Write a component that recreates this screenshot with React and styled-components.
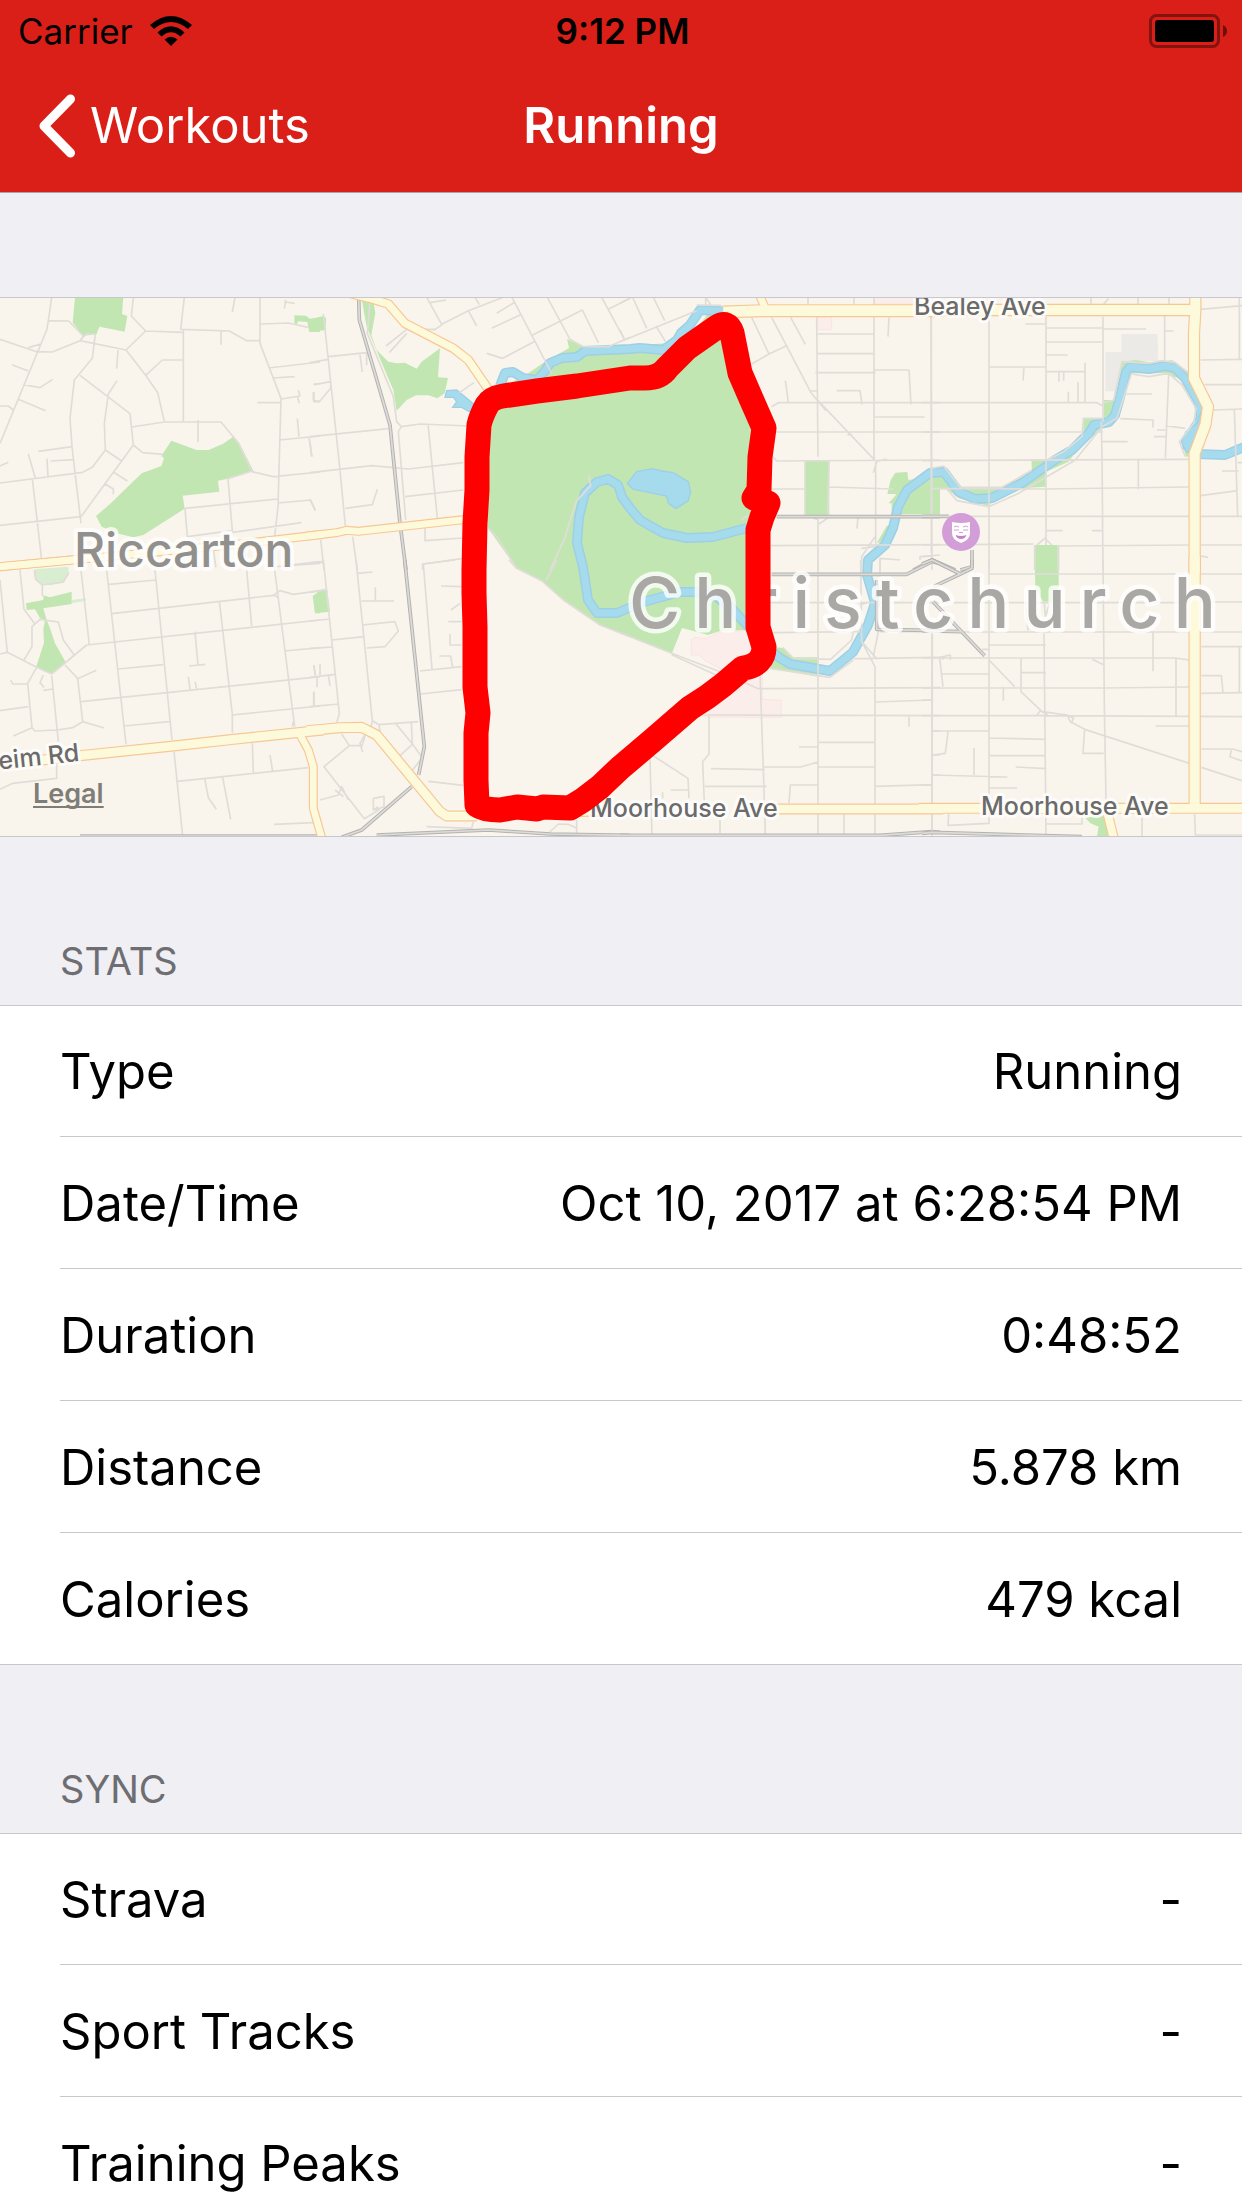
import styled, { createGlobalStyle } from "styled-components";

const GlobalStyle = createGlobalStyle`
  * {
    box-sizing: border-box;
  }
  body {
    margin: 0;
    background: #efeff4;
    font-family: Inter, "Liberation Sans", sans-serif;
    color: #000;
  }
`;

const Screen = styled.div`
  display: flex;
  flex-direction: column;
  height: 100vh;
`;
const Header = styled.header`
  flex: none;
  background: #da1f18;
  border-bottom: 1px solid #a9a4a9;
`;
const StatusBar = styled.div`
  display: grid;
  grid-template-columns: 1fr auto 1fr;
  align-items: center;
  height: 60px;
  padding: 2px 15px 0 18px;
  font-size: 35px;
  line-height: 40px;
`;
const Carrier = styled.div`
  display: flex;
  align-items: center;
  gap: 17px;
`;
const Time = styled.time`
  font-weight: 600;
`;
const Battery = styled.svg`
  justify-self: end;
`;
const NavBar = styled.nav`
  display: grid;
  grid-template-columns: 1fr auto 1fr;
  align-items: center;
  height: 132px;
  padding: 0 38px;
`;
const BackButton = styled.button`
  display: flex;
  align-items: center;
  justify-self: start;
  gap: 15px;
  padding: 0;
  border: 0;
  background: none;
  color: #fff;
  font-family: inherit;
  font-size: 49px;
  line-height: 64px;
`;
const Title = styled.h1`
  margin: 0;
  color: #fff;
  font-size: 49px;
  font-weight: 600;
  line-height: 64px;
`;
const Content = styled.main`
  flex: 1;
  min-height: 0;
  padding-top: 104px;
  overflow-y: auto;
  scrollbar-width: none;
`;

const MapCard = styled.section`
  position: relative;
  border-top: 1px solid #c8c7cc;
  border-bottom: 1px solid #c8c7cc;
`;
const MapSvg = styled.svg`
  display: block;
  width: 100%;
  background: #f9f5ed;
`;
const LegalLink = styled.a`
  position: absolute;
  left: 33px;
  bottom: 26px;
  color: #7f7d78;
  font-size: 27px;
  font-weight: 600;
  line-height: 32px;
  text-decoration-thickness: 2px;
  text-underline-offset: 3px;
  text-decoration-skip-ink: none;
`;
const Line = styled.path`
  fill: none;
  stroke: ${({ $color }) => $color};
  stroke-width: ${({ $width }) => $width};
  stroke-linejoin: round;
  stroke-linecap: ${({ $round }) => ($round ? "round" : "butt")};
`;
const Label = styled.text`
  fill: ${({ $color }) => $color || "#6b6b6b"};
  font-size: ${({ $size }) => $size || 25}px;
  font-weight: 500;
  stroke: rgba(255, 255, 255, 0.8);
  stroke-width: ${({ $halo }) => $halo || 6}px;
  stroke-linejoin: round;
  paint-order: stroke;
`;
const CityLabel = styled(Label)`
  letter-spacing: 14px;
`;

const SectionTitle = styled.h2`
  display: flex;
  align-items: flex-end;
  height: 168px;
  margin: 0;
  padding: 0 60px 20px;
  color: #6d6d72;
  font-size: 38px;
  font-weight: 400;
  line-height: 48px;
`;
const Group = styled.dl`
  margin: 0;
  padding-left: 60px;
  border-top: 1px solid #c8c7cc;
  border-bottom: 1px solid #c8c7cc;
  background: #fff;
`;
const Row = styled.div`
  display: flex;
  justify-content: space-between;
  align-items: center;
  height: 132px;
  padding: 2px 60px 0 0;
  border-bottom: 1px solid #c8c7cc;
  font-size: 49px;
  line-height: 64px;

  &:first-child {
    height: 131px;
  }
  &:last-child {
    height: 131px;
    border-bottom: 0;
  }
`;
const Name = styled.dt``;
const Value = styled.dd`
  margin: 0;
`;

const STATS = [
  ["Type", "Running"],
  ["Date/Time", "Oct 10, 2017 at 6:28:54 PM"],
  ["Duration", "0:48:52"],
  ["Distance", "5.878 km"],
  ["Calories", "479 kcal"],
];

const SYNC = [
  ["Strava", "-"],
  ["Sport Tracks", "-"],
  ["Training Peaks", "-"],
];

// Every tile has its own origin and is drawn at a third of its units.
const TILES = [
  {
    x: 0,
    y: 290,
    parks:
      "M225 22 370 22 366 72 382 78 374 125 298 110 290 132 250 138 218 98ZM883 76 918 77 930 86 960 83 960 126 928 126 924 108 922 96 894 94 890 106 883 98ZM514 452 590 480 626 480 668 462 700 440 718 460 760 542 684 566 654 572 658 605 548 617 554 656 430 735 400 742 350 730 305 710 288 678 330 642 425 550 484 528 492 505 484 498Z",
    roads:
      "M155 22 145 92 140 120 0 460M145 92 206 93 250 138 240 152M0 148 110 185 157 186 240 152 378 180 437 256 473 308 493 395M85 173 122 162M240 152 258 132 286 132 277 205 223 270 210 385 216 470 225 548 243 700M400 22 394 78 437 123 378 180M437 123 550 127M553 22 542 118 688 123 740 152 780 152M550 118V395M437 256 487 210 550 210M240 256 390 371 400 465 243 680 0 706M351 272 325 312 313 400 316 480 365 513M316 480 277 532 248 547 0 579M400 465 428 488 490 493M395 411 493 396 663 396 716 460 756 545 820 560 960 546M756 543 684 566M594 390V457M354 180 350 236M705 22 697 66M663 123V164M780 22V160L843 325 834 650 824 740M780 102 865 99 925 112M853 56 857 30M857 36 884 40M806 234 960 216M818 264 884 260M843 327 900 318M895 300 900 318M893 322 898 340M772 338H843M838 450 960 438M892 385 897 440M927 443 936 500M940 283 960 281M942 306V335H960M36 224 85 243M70 284 120 293 158 268M55 328 137 362M0 348H25L40 360M85 492 106 565M115 484 216 470M152 513 220 509M141 506 144 560M0 528 25 517M97 567 125 810M340 546 382 573M315 582 340 597V613M555 655 833 627M834 639 932 630 946 661M555 655 562 740 695 722M698 727 904 698M684 566 698 735M640 780 648 832M735 770V800M828 770 824 840M850 828 960 820",
    majors: [["M-10 831 110 820 480 785 720 762 970 733", 20]],
  },
  {
    x: 310,
    y: 290,
    parks:
      "M0 88 40 78 48 84 47 120 0 126ZM154 22 190 34 196 70 184 135 200 180 235 215 262 220 285 218 320 236 335 215 390 175 384 262 414 264 404 310 382 325 355 316 318 316 290 330 260 362 250 300 222 235 170 110Z",
    water:
      "M410 302 440 300 495 345 515 310 525 330 490 372 455 352 428 352 440 335 430 322 405 322Z",
    roads:
      "M40 72 55 210 90 540 106 708M0 218 55 208M55 200 170 188M150 195 157 246M170 188V226M180 34 172 130 250 320 260 395 274 410 265 425 287 690M274 410 330 402 480 408M0 440 235 416M0 548 185 527 295 537 460 518M354 402 382 684M285 620 460 600M106 655 187 644 202 598M14 284 62 275M10 306V330L28 335 62 295 62 275M350 22 395 103 475 62 580 22M360 38 408 30M475 62 500 108M495 22 508 44M560 70 612 38M545 115 632 74M606 22 725 250M530 190 578 205 672 155M668 135 817 60 865 158M712 22 780 148 820 170 895 170 960 142M875 22 942 146M895 58 960 25M228 168 290 118M238 188 290 130M370 122 395 105M290 118 375 118M448 308 492 278M345 710V752L460 744M338 840V822L455 806M32 748 42 840M0 818H38M128 740 142 840M0 455 5 500M0 628 16 662M535 715 560 740 620 835M836 557 842 587 798 635 764 745 720 840",
    rails: "M146 22 148 90 240 405 270 700 288 840",
    majors: [
      ["M120 10 180 25 235 42 285 100 430 175 475 210 540 305", 22],
      ["M-10 738 80 728 110 721 145 724 470 688", 20],
    ],
  },
  {
    x: 620,
    y: 290,
    parks:
      "M555 510H628V680H555ZM826 548 862 546 865 570 930 560 960 535V672H815V640H806L830 612H802L812 570ZM800 708 818 700 800 750 770 760Z",
    pink: "M592 82H635V119H592ZM762 22H880V42H762Z",
    water:
      "M22 580 50 545 97 536 125 543 160 548 205 575 212 605 205 632 168 656 145 640 140 618 75 605 40 598Z",
    roads:
      "M590 82 594 500M594 690V840M762 22V510M767 516V770M933 82 936 840M455 350 475 338H960M466 426H960M458 500 470 513 960 510M455 597H555M627 591 820 597M452 767 960 764M590 132H762M590 191H762M586 248H767M762 240H867L873 343M650 302H720L726 343M762 381H914M455 82 573 308 618 362M573 303H590M594 332 762 508M760 548 770 515 800 507M682 434H696M395 82 447 192 500 167M447 192 395 222M512 82 556 163M496 272 505 336M807 82 804 140M702 22V42M564 22V42M257 22V45M257 22 275 48M0 40 35 22M38 22 80 115M0 155 230 62M100 22 134 92M108 108 136 154M0 120 12 145M555 513V684M627 513 623 684 597 702M580 684 597 690M765 740 725 800V840M765 770 725 775M780 840V805L840 810M900 810V800L960 795M714 680 711 716M230 45 300 46 320 55M362 690 385 676",
    rails: "M470 680H960M880 840 936 810 970 825",
    majors: [
      ["M310 66 430 62H970", 32],
      ["M434 50 418 15", 20],
    ],
  },
  {
    x: 922,
    y: 290,
    gray: "M550 186H598V132H706L709 212 600 216 580 304H550Z",
    parks:
      "M0 560 30 590V672H0ZM28 535 65 528 115 592 240 592 330 545 328 508H372V590L250 597 200 648 110 625 75 597H30ZM372 510 450 470 484 440V385H520L540 420 480 460 440 515 372 545ZM545 330H580L600 215 640 210 700 220 750 210 800 245 810 300 770 265 720 250 620 250 590 370 545 385ZM338 765H412V840H338ZM780 455 792 500H800V470Z",
    water: "M836 370 845 400 810 490 792 485 778 455 792 425 825 400Z",
    roads:
      "M28 80V790M201 80V840M372 80V765M543 80V395M538 395 540 500 543 840M0 338H525L543 348M0 426H480M520 426H543M0 512 800 508M30 595 370 597 800 591M0 679H800M836 679H960M0 765 335 762M410 768 800 765M836 765H960M372 114H543M543 117H672M372 156H543M372 195H437M310 102H372M203 231H372M306 231 303 272M372 245H489M489 218V338M411 247V275M425 247V272M439 305V338M468 276V338M728 78V210M728 123H755M836 58 960 47M952 22V210M836 210 960 208M848 284H960M875 360 960 357M937 357 947 680M900 543H950M947 518H960M836 617 947 602M612 312H690M595 386 693 390V413M740 255 730 505M730 407 790 415M705 420H730M696 440H730M540 455H617M649 508V598M372 722H422M510 722H543M507 22V42M648 22V42M741 22V42M545 42 560 25M836 798 858 802M345 765 368 745 390 765M338 765V840M408 765V840M240 592 330 540M370 512 425 485 480 440 484 385H540M28 535 65 528 115 592H240M30 597H75L105 632 200 650 290 610 460 510 540 410 585 385 628 252 680 260 740 250 780 285 822 355 815 400 772 455 790 500M545 338 575 330 600 215 680 220 720 212 760 218 800 250M0 800 30 798",
    rails: "M0 679H80M150 780V830L115 840M0 825 30 810 100 840",
    majors: [
      ["M-10 60H820", 30],
      ["M820 10V60L816 130V265L858 350 850 405 818 490V850", 30],
    ],
  },
  {
    x: 0,
    y: 560,
    paleParks: "M103 28 205 20 206 45 190 68 150 76 125 72 105 55ZM215 120 258 115V122L215 130Z",
    parks:
      "M78 130 130 120 130 106 150 112 215 95V132L130 145 140 180 152 210 165 250 198 308 155 342 108 322 132 248 130 208 135 180 120 175 105 148 80 150ZM938 108 960 92V160H945Z",
    roads:
      "M0 60 22 277 110 322 83 370 96 503 105 513 172 510 218 503 248 485 233 355 195 315M110 322 155 342M22 277 0 282M83 372H38L32 360M0 452 85 440M40 528 96 503M248 485 313 504M230 358 289 331M60 30 72 148 103 190M72 300 96 260V200L120 178 175 186 190 240 222 284M127 108V75M103 30 107 58 127 75 190 66 206 38M155 347 175 545M130 345 120 368 132 382M130 391 158 387M155 342 260 255 960 180M243 30 268 255M320 30 378 553M465 30 516 540M327 73 467 60M336 161 820 106 840 92 880 103 960 92M355 327 490 314M243 425 960 350M372 498 508 485M658 122 697 463V518M697 465 960 438M740 30 755 198M824 30 884 500M830 20 960 5M853 273 960 263M585 215 594 317M567 318 616 313M565 350 570 388M585 365 590 388M941 315 946 347M941 395V438M0 688 38 670 170 655V610M522 575 548 828M533 664 925 623M757 550 760 640M810 585 818 634M614 656 625 713 649 748M668 652 692 778M822 793 940 788M877 500 880 485M818 104 834 112",
    rails: "M240 828H960",
    majors: [
      ["M895 515 925 570 940 620V745L967 840", 20],
      ["M-10 616 240 587 520 558 700 538 970 510", 26],
      ["M-10 21 300 -8", 20],
    ],
  },
  {
    x: 310,
    y: 560,
    parks: "M10 108H22V95L52 90 60 155 15 160Z",
    roads:
      "M40 0 88 460 80 490M138 0 187 482M0 10 35 5M143 40 188 36M155 123H252M196 82V123M0 97 50 88M0 183 60 177M66 240 162 230M157 195 255 185 265 213 225 260 170 264M0 266 66 261M0 352 75 343M0 440 87 432M12 316 16 345M30 312V345M21 350V382M55 345 60 378M12 395V438M187 482 207 494 325 485M207 494 210 515M258 492 308 553 335 590M304 487 307 553 270 587M335 595 300 640M187 482 182 505M170 515 150 550 158 577M165 528 155 560M95 522 118 557H150M118 557 42 620 163 776 210 748M30 720 85 705 95 680 115 720M75 690 100 710M190 715 222 709V740L195 750M190 715V750L205 740M340 12 435 0M340 12 366 328M393 78 455 80M423 150 450 130M415 185H455M420 222V255H455M388 288H422L428 322M330 333 455 320M332 402 455 389M355 664 460 676M350 800 485 805 490 785M710 825 745 792 775 793 800 805M800 780V825M597 0 620 25 695 62 760 120 870 195 960 230M740 0 708 62",
    rails:
      "M284 0 343 560 326 645M305 680 155 810 95 832M200 825 535 810 720 822 960 826",
    majors: [
      ["M-10 512 90 503 155 502 200 525 390 755 410 768 500 768", 26],
      ["M780 760 880 758", 16],
    ],
  },
  {
    x: 620,
    y: 560,
    parks: "M450 325 470 262 488 264 520 292H595V350Z",
    pink: "M213 240 225 232 258 236 300 215 380 212 400 280 310 330 260 305 235 285H213ZM230 465 427 330V418L484 421V472H260Z",
    roads:
      "M594 0V828M765 320V828M936 220V828M452 128H960M460 218 720 215M780 215 960 215M700 296 960 292M415 386 960 383M250 465 960 467M594 547H765M537 561H594M432 621H542L594 606M594 621H765M765 426 936 420M867 470V500M936 513H960M936 585H960M936 645H960M765 679 936 674M507 730 511 675H594M255 679H440M273 626 434 629M420 340 430 630 436 828M267 465V582L248 605 253 730M96 585 204 655 207 715M152 690H204M90 595 96 828M128 697V715M300 765V820M672 760V822M0 218 155 280 300 335 415 386M155 284 300 350M450 325 630 352 700 300M488 262 520 295 632 298 695 240 700 215M722 0 725 245 765 320M720 135 740 128H770L776 210 760 290M725 245 772 298M780 0V40",
    rails:
      "M455 43H860L936 5 960 10M770 60V208L960 212M0 826H780L936 815 960 817",
    majors: [["M450 747H970", 26]],
  },
  {
    x: 922,
    y: 560,
    parks:
      "M338 0H410V80L390 125H363L340 80ZM488 772 545 768 560 828H525L530 800 505 790Z",
    roads:
      "M31 220 30 828M201 0V790L78 796 80 762M366 220 372 828M543 0 547 440 552 720M200 42H800M836 42H960M50 128H800M836 126H960M120 216H960M0 294H760L802 300M0 384H550L802 381M0 467H370L960 470M203 255H372M297 294V395L360 455 435 465 445 485 488 508 802 610M435 465 455 475 447 490M838 622 960 662M297 338H372M180 268H200M201 300 278 380M244 380V422M53 294 63 380M60 342H200M53 292 85 285V300M60 298 75 285M31 513H200M78 515 70 580 32 585M203 534 372 538M203 587H372M281 621 372 626M31 645 256 651M156 564V645M203 684H285M0 675H30M0 420H30M488 505 483 580H545M511 298 545 314M693 218V334M762 294V467M700 498H802M838 260H960M952 260V400M838 347H898L903 398M838 400 960 398M838 567H932L960 575M928 570 924 590 960 603M310 128 318 212M367 128 370 170 383 128M372 792H480V770M660 765V828M818 762 820 825H960M345 465 355 452 378 465",
    rails:
      "M35 80 115 42 150 25V0M0 12 30 0 115 42M0 212 118 215M33 125 188 287M0 820 30 817 480 830",
    majors: [
      ["M552 740 575 835", 24],
      ["M-10 745H970", 26],
      ["M818 -10V745", 30],
    ],
  },
];

const HAGLEY_PARK =
  "M488 528 500 545 517 569 542 581 563 600 600 625 620 633 672 653 682 628 708 635 720 631 747 630 760 625 760 450 764 428 732 333 722 322 710 311 698 327 680 340 672 343 620 346 583 346 567 339 569 348 543 363 523 377 505 385 488 400 478 425Z";
const RIVER =
  "M500 386 505 373 513 372 523 378 537 380 545 371 550 363 562 358 577 357 585 351 630 349 640 348 663 350 677 340 681 333 690 325 700 310 720 311 728 315M747 528 713 537 687 538 663 533 640 520 630 508 622 497 618 485 608 479 597 482 585 493 579 517 577 543 583 567 588 600 597 613 617 613 643 602 680 592 697 592 717 597 733 610 747 625 767 648 780 658 790 664 830 671 853 652 868 625 875 603 867 575 868 560 885 545 893 528 898 507 907 490 930 473 944 472 959 492 975 499 992 498 1022 483 1055 460 1072 450 1089 433 1094 425 1109 422 1115 415 1120 397 1126 372 1130 367 1149 369 1165 366 1175 368 1185 378 1199 403 1201 418 1189 437 1187 450M1196 454 1225 455 1244 447";
const ROUTE =
  "M630 378 577 386 537 391 503 396Q491 398 487 405 481 416 479 425L477 457 477 490 475 523 474 570 474 593 475 627 475 687 478 713 476 733 476 780 477 805Q484 810 500 810L517 807 537 809 543 807 570 808 583 800 600 787 620 768 633 757 653 740 690 708 707 697 723 685 743 668Q764 665 764 647L758 627 758 530 762 517 768 503 754 498 759 490 760 457 764 428 753 403 740 373 732 333Q728 320 717 327L687 348 667 368Q660 378 645 378Z";

const Layer = ({ children }) =>
  TILES.map((tile) => (
    <g
      key={`${tile.x}-${tile.y}`}
      transform={`translate(${tile.x} ${tile.y}) scale(${1 / 3})`}
    >
      {children(tile)}
    </g>
  ));

const WorkoutMap = () => (
  <MapSvg viewBox="0 298 1242 538" role="img" aria-label="Workout route">
    <Layer>
      {(tile) => (
        <>
          <path d={tile.gray} fill="#ebeae6" />
          <path d={tile.pink} fill="#fbedea" stroke="#fadfdb" strokeWidth="2" />
          <path d={tile.paleParks} fill="#d9edd0" />
          <path d={tile.parks} fill="#c2e6b2" />
        </>
      )}
    </Layer>
    <path d={HAGLEY_PARK} fill="#c2e6b2" />
    <Line d={RIVER} $color="#9dcfe6" $width={10} />
    <Line d={RIVER} $color="#a6dbee" $width={7} />
    <Layer>
      {(tile) => (
        <>
          <path
            d={tile.water}
            fill="#a6dbee"
            stroke="#9dcfe6"
            strokeWidth="4"
          />
          <Line d={tile.roads} $color="#e0ddd8" $width={5} />
          <Line d={tile.rails} $color="#b4b3b1" $width={11} />
          <Line d={tile.rails} $color="#dddbd7" $width={5} />
        </>
      )}
    </Layer>
    <Layer>
      {(tile) =>
        tile.majors.map(([d, width]) => (
          <Line key={d} d={d} $color="#f7c794" $width={width + 7} />
        ))
      }
    </Layer>
    <Layer>
      {(tile) =>
        tile.majors.map(([d, width]) => (
          <Line key={d} d={d} $color="#fdfadb" $width={width} />
        ))
      }
    </Layer>

    <circle cx="961" cy="532" r="19" fill="#d39ed8" />
    <path
      d="M952 522Q961 524 970 522V533Q970 540 961 543 952 540 952 533Z"
      fill="#fff"
    />
    <path
      d="M954 527Q956 525 959 527M963 527Q966 525 968 527M954 530H959M963 530H968M959 532.500H963"
      fill="none"
      stroke="#d39ed8"
    />
    <path
      d="M955.500 535Q961 537 966.500 535 965 539 961 539 957 539 955.500 535Z"
      fill="#c77dce"
    />

    <Label x="74" y="567" $size={48} $color="#92908c" $halo={8}>
      Riccarton
    </Label>
    <CityLabel x="629" y="628" $size={70} $color="#a9a8a4" $halo={9}>
      Christchurch
    </CityLabel>
    <Label x="914" y="315">
      Bealey Ave
    </Label>
    <Label x="590" y="817">
      Moorhouse Ave
    </Label>
    <Label x="981" y="815">
      Moorhouse Ave
    </Label>
    <Label x="80" y="761" textAnchor="end" transform="rotate(-6 80 761)">
      Blenheim Rd
    </Label>
    <Line d={ROUTE} $color="#f00" $width={25} $round />
  </MapSvg>
);

const Section = ({ title, rows }) => (
  <section>
    <SectionTitle>{title}</SectionTitle>
    <Group>
      {rows.map(([name, value]) => (
        <Row key={name}>
          <Name>{name}</Name>
          <Value>{value}</Value>
        </Row>
      ))}
    </Group>
  </section>
);

const App = () => {
  return (
    <Screen>
      <GlobalStyle />
      <Header>
        <StatusBar>
          <Carrier>
            Carrier
            <svg width="42" height="30" viewBox="0 0 42 30" aria-hidden="true">
              <path d="M0 9Q21-9 42 9L38 13Q21-1 4 13Z" />
              <path d="M7.500 16.500Q21 4 34.500 16.500L30.500 20.500Q21 12 11.500 20.500Z" />
              <path d="M14.500 23.500Q21 18 27.500 23.500L21 30Z" />
            </svg>
          </Carrier>
          <Time>9:12 PM</Time>
          <Battery width="78" height="34" viewBox="0 0 78 34" aria-hidden="true">
            <rect
              x="1.500"
              y="1.500"
              width="68"
              height="31"
              rx="6"
              fill="none"
              stroke="#84120f"
              strokeWidth="3"
            />
            <rect x="6" y="6" width="59" height="22" rx="3" />
            <path d="M74 11Q78 13 78 17 78 21 74 23Z" fill="#6f0f0c" />
          </Battery>
        </StatusBar>
        <NavBar>
          <BackButton type="button">
            <svg width="37" height="64" viewBox="0 0 37 64" aria-hidden="true">
              <path
                d="M32.500 5 6 32 32.500 59"
                fill="none"
                stroke="#fff"
                strokeWidth="9"
                strokeLinecap="round"
                strokeLinejoin="round"
              />
            </svg>
            Workouts
          </BackButton>
          <Title>Running</Title>
        </NavBar>
      </Header>
      <Content>
        <MapCard>
          <WorkoutMap />
          <LegalLink href="#legal">Legal</LegalLink>
        </MapCard>
        <Section title="STATS" rows={STATS} />
        <Section title="SYNC" rows={SYNC} />
      </Content>
    </Screen>
  );
};
export default App;
